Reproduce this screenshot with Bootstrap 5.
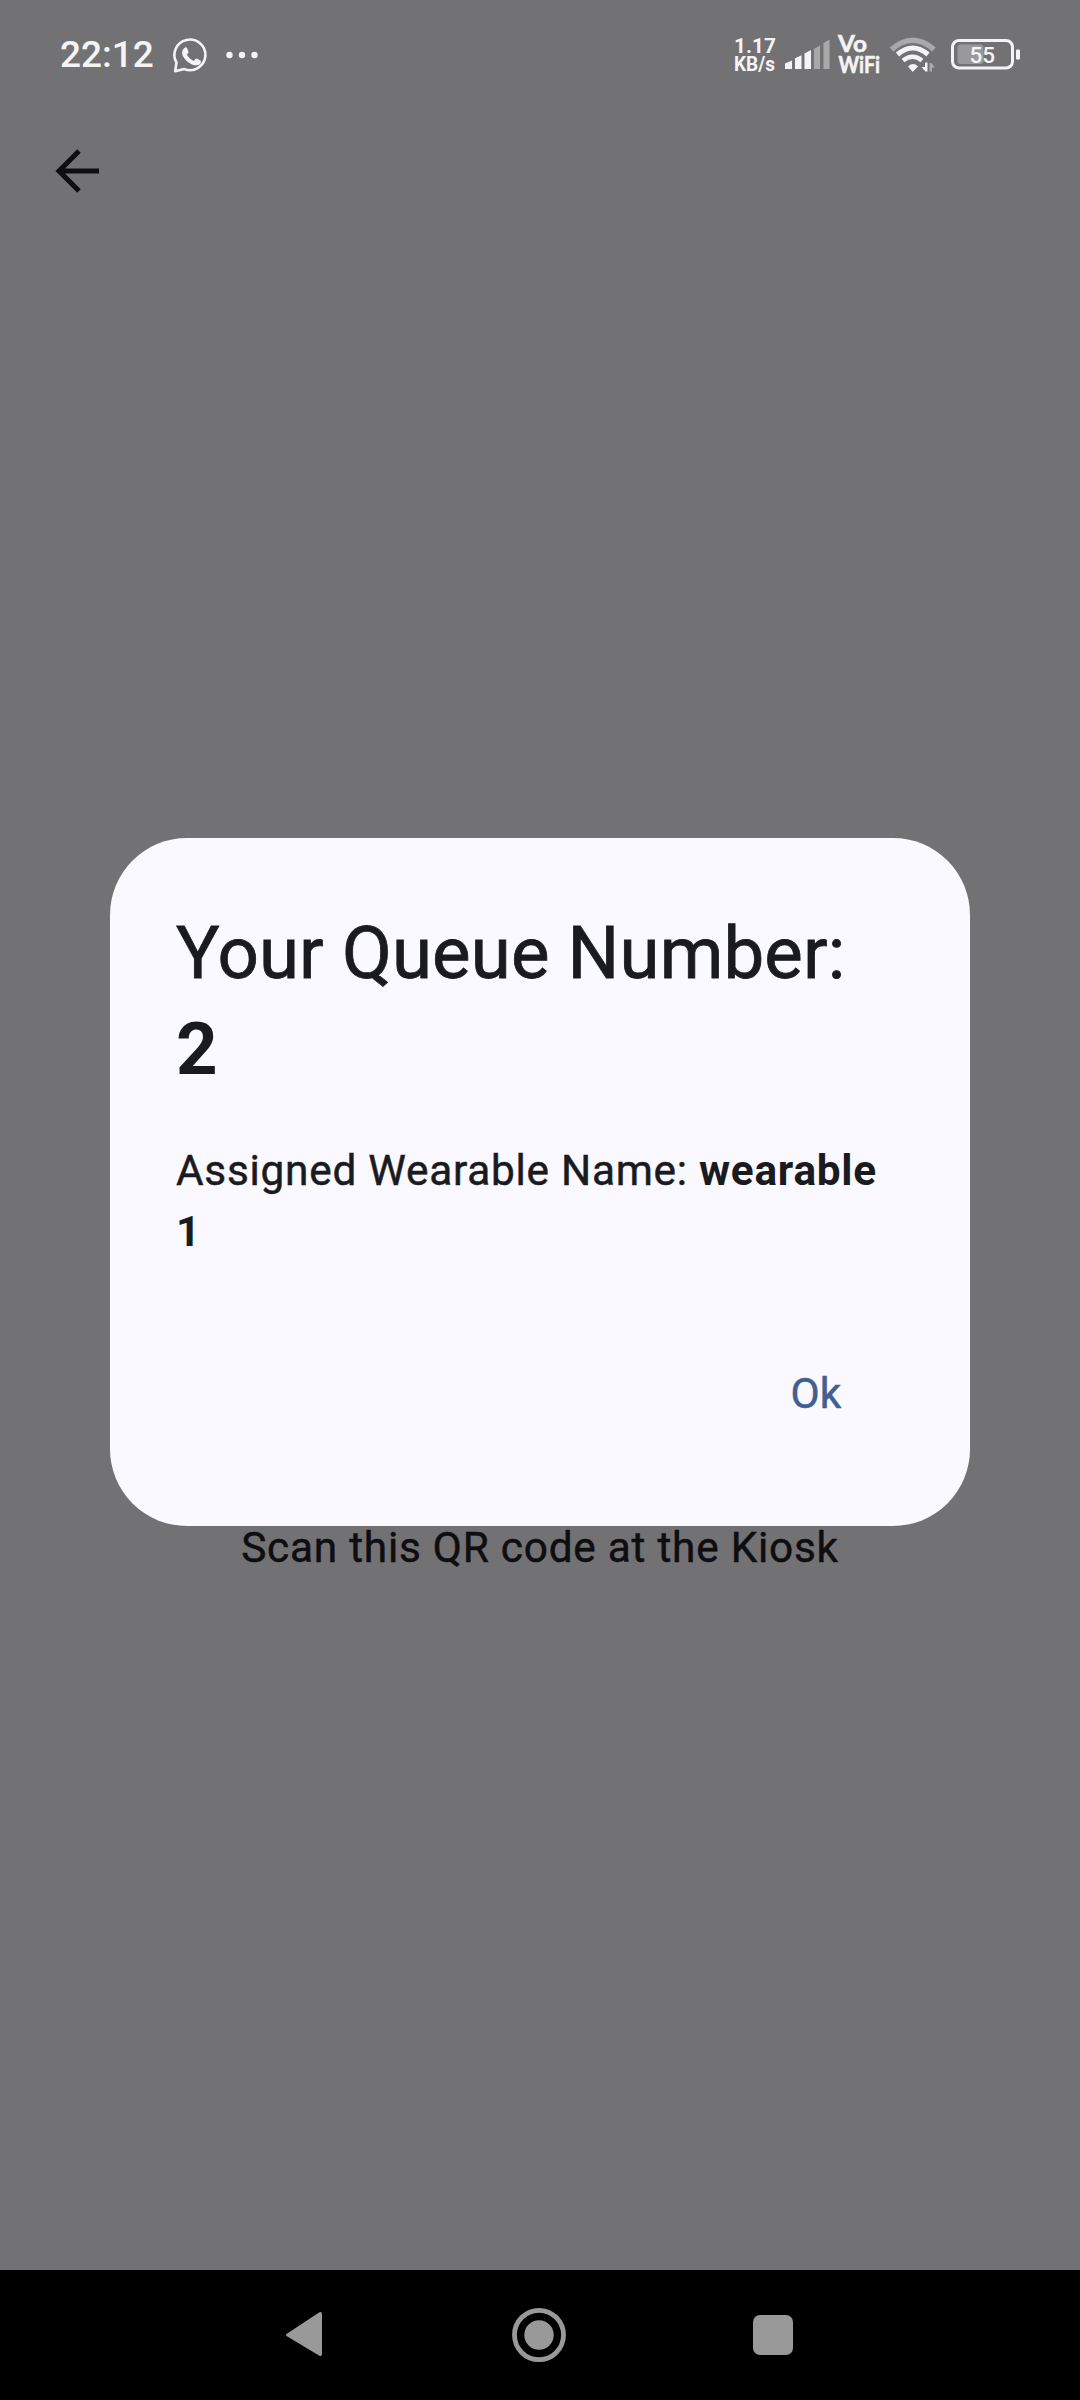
<!DOCTYPE html>
<html lang="en">
<head>
<meta charset="utf-8">
<meta name="viewport" content="width=device-width, initial-scale=1">
<title>Queue Number</title>
<link href="https://cdn.jsdelivr.net/npm/bootstrap@5.3.0/dist/css/bootstrap.min.css" rel="stylesheet">
<style>
  body { font-family: Roboto, "Liberation Sans", sans-serif; background: #727274; color: #0e0e10; }
  .screen { width: 1080px; height: 2400px; overflow: hidden; }
  .status-bar { height: 110px; padding-left: 60px; color: #f4f4f5; }
  .status-bar svg, .app-bar svg, .nav-keys svg { display: block; flex: none; }
  .clock { font-size: 37px; font-weight: 500; line-height: 44px; width: 95px; }
  .app-bar { height: 121px; padding: 37px 0 0 54px; }
  .scan-hint { font-size: 42.35px; line-height: 60.5px; letter-spacing: .76px; padding-top: 1286.5px; -webkit-text-stroke: .5px currentColor; }
  .nav-keys { height: 130px; padding: 0 286px 0 284px; background: #000; }
  .home-key { margin-left: 2px; }
  .scrim .modal-dialog { width: 860px; max-width: 860px; margin: 838px auto 0; }
  .queue-card { border: 0; border-radius: 77px; padding: 68px 66px 66px; height: 688px; background: #faf9ff; color: #1a1b20; }
  .queue-title { font-size: 72.6px; line-height: 96px; font-weight: 400; letter-spacing: .12px; -webkit-text-stroke: .8px currentColor; }
  .queue-text { font-size: 42.35px; line-height: 60.5px; letter-spacing: .74px; margin-top: 43px; -webkit-text-stroke: .5px currentColor; }
  .queue-card b { font-weight: 700; -webkit-text-stroke: 0; }
  .ok-btn { --bs-btn-color: #415f91; --bs-btn-hover-color: #415f91; width: 176px; height: 132px; font-size: 42.35px; letter-spacing: .3px; padding: 0; border: 0; -webkit-text-stroke: .5px currentColor; }
</style>
<script src="https://cdn.jsdelivr.net/npm/bootstrap@5.3.0/dist/js/bootstrap.bundle.min.js"></script>
</head>
<body>
<div class="screen d-flex flex-column position-relative">
  <header class="status-bar d-flex align-items-center justify-content-between">
    <div class="d-flex align-items-center">
      <span class="clock">22:12</span>
      <svg width="120" height="40" viewBox="154 34 120 40">
        <path d="M174.200 70.300 L175.500 61.500 A15.500 15.300 0 1 1 183.300 68.100 Z" fill="none" stroke="#f4f4f5" stroke-width="2.600" stroke-linejoin="round"/>
        <path d="M183 47.2c1.300-1.200 2.600-1.100 3.200.3l1.200 3.100c.4 1-.2 1.800-1.500 3.200 1.700 3 4 4.900 7 6.200 1.600-1.900 2.100-2.700 3.100-2.300l3.200 1.600c1.200.6.800 2.300 0 3.400-1.900 2.200-5 2-8.200.7-4.500-1.900-8.300-5.800-9.600-9.600-.8-2.700.2-5.300 1.600-6.600z" fill="#f4f4f5"/>
        <circle cx="228.500" cy="54" r="3.200" fill="#f4f4f5"/><circle cx="241" cy="54" r="3.200" fill="#f4f4f5"/><circle cx="253.500" cy="54" r="3.200" fill="#f4f4f5"/>
      </svg>
    </div>
    <svg width="350" height="60" viewBox="730 25 350 60" fill="#f4f4f5">
      <g font-family="Roboto, sans-serif" font-weight="700">
        <text x="734" y="53" font-size="21" textLength="42" lengthAdjust="spacingAndGlyphs">1.17</text>
        <text x="734" y="71" font-size="19.500" textLength="41" lengthAdjust="spacingAndGlyphs">KB/s</text>
      </g>
      <path d="M785 63.500l7-3V69h-7zM795 58.200l6.500-3V69h-6.500zM804.500 53.500l6.500-3.500V69h-6.500z"/>
      <path d="M814 49l6-3.500V69h-6zM823.500 43l6-3.500V69h-6z" fill="#a9a9aa"/>
      <g font-family="Lato, sans-serif" font-weight="700" stroke="#f4f4f5" stroke-width=".6">
        <text x="838" y="52" font-size="23.500" textLength="29" lengthAdjust="spacingAndGlyphs">Vo</text>
        <text x="838.500" y="72.500" font-size="22" textLength="41.500" lengthAdjust="spacingAndGlyphs">WiFi</text>
      </g>
      <g fill="none">
        <path d="M891.500 49.500Q912.700 31 934 49.500" stroke="#a9a9aa" stroke-width="5.500"/>
        <path d="M897.500 54.500Q912.700 41.500 928 54.500" stroke="#f4f4f5" stroke-width="5"/>
        <path d="M903 60.500Q912.700 53 922 60.500" stroke="#f4f4f5" stroke-width="4.500"/>
      </g>
      <path d="M908 66.500q5-4.800 10 0L912.700 72z"/>
      <path d="M925 62.500h2.500V71.500h-2l-4-4.500h3.500z"/>
      <path d="M929.500 71.500h2.500V67.500h3l-3.500-4.500h-2z" fill="#a9a9aa"/>
      <rect x="952.500" y="40.500" width="60" height="27.500" rx="6.500" fill="none" stroke="#f4f4f5" stroke-width="3"/>
      <rect x="957.500" y="44.500" width="26" height="19.500" rx="3" fill="#99999b"/>
      <rect x="1016" y="49.500" width="4" height="10" rx="1"/>
      <text x="982.300" y="62.500" font-family="Roboto, sans-serif" font-size="22.500" font-weight="500" text-anchor="middle">55</text>
    </svg>
  </header>
  <nav class="app-bar">
    <svg width="48" height="48" viewBox="54 147 48 48" fill="none" stroke="#0e0e10" stroke-width="5"><path d="M99 171H59M79 151L59 171L79 191"/></svg>
  </nav>
  <main class="flex-grow-1 text-center overflow-hidden">
    <p class="scan-hint m-0">Scan this QR code at the Kiosk</p>
  </main>
  <footer class="nav-keys d-flex align-items-center justify-content-between">
    <svg width="40" height="50" viewBox="0 0 40 50"><path d="M2.500 24L35 2.500Q38 1 38 4V44Q38 47 35 45.500L2.500 26Q1 25 2.500 24Z" fill="#999"/></svg>
    <svg class="home-key" width="56" height="60" viewBox="0 0 56 60"><ellipse cx="28" cy="30" rx="24.500" ry="24.700" fill="none" stroke="#999" stroke-width="4.800"/><ellipse cx="28" cy="30" rx="14.700" ry="14.700" fill="#999"/></svg>
    <svg width="42" height="42" viewBox="0 0 42 42"><rect x="1" y="1" width="40" height="40" rx="7" fill="#999"/></svg>
  </footer>
  <div class="modal scrim d-block position-absolute" role="dialog" aria-labelledby="queueTitle">
    <div class="modal-dialog">
      <div class="modal-content queue-card">
        <h1 class="queue-title mb-0" id="queueTitle">Your Queue Number:<br><b>2</b></h1>
        <p class="queue-text mb-0">Assigned Wearable Name: <b>wearable 1</b></p>
        <div class="d-flex justify-content-end mt-auto"><button type="button" class="btn ok-btn">Ok</button></div>
      </div>
    </div>
  </div>
</div>
</body>
</html>
